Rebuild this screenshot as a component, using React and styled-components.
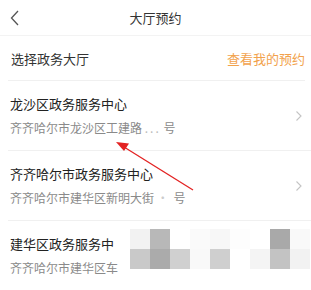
import React from 'react';
import styled, { createGlobalStyle } from 'styled-components';

const GlobalStyle = createGlobalStyle`
  html, body {
    margin: 0;
    padding: 0;
    background: #fff;
    font-family: "Noto Sans CJK SC", "Noto Sans", sans-serif;
  }
`;

const Page = styled.div`
  position: relative;
  width: 311px;
  height: 290px;
  overflow: hidden;
  background: #fff;
`;

const Header = styled.header`
  display: grid;
  grid-template-columns: 40px 1fr 40px;
  align-items: center;
  height: 35px;
  border-bottom: 1px solid #f3f3f3;
`;

const BackButton = styled.div`
  display: flex;
  align-items: center;
  padding-left: 10px;
  height: 100%;
`;

const Title = styled.h1`
  margin: 0;
  text-align: center;
  font-size: 13px;
  font-weight: 400;
  color: #333;
  line-height: 18px;
`;

const SectionHead = styled.div`
  display: flex;
  align-items: center;
  justify-content: space-between;
  height: 44px;
  margin: 0 6px 0 8px;
  padding-left: 3px;
  border-bottom: 1px solid #f0f0f0;
  font-size: 13px;
  color: #333;
`;

const MyLink = styled.span`
  color: #f2a24c;
`;

const List = styled.ul`
  list-style: none;
  margin: 0;
  padding: 0 0 0 8px;
`;

const Row = styled.li`
  position: relative;
  display: flex;
  align-items: center;
  justify-content: space-between;
  height: 69px;
  padding-right: 8px;
  border-bottom: 1px solid #f0f0f0;
`;

const RowText = styled.div`
  display: flex;
  flex-direction: column;
  gap: 6px;
  padding-left: 2px;
  align-self: flex-start;
  padding-top: 14px;
`;

const HallName = styled.div`
  font-size: 13px;
  line-height: 18px;
  color: #222;
`;

const Address = styled.div`
  font-size: 12px;
  line-height: 18px;
  color: #8a8a8a;
  white-space: nowrap;
`;

const Blur = styled.span`
  color: ${p => p.$tone || '#bbb'};
  letter-spacing: 2px;
`;

const Mosaic = styled.div`
  position: absolute;
  left: 122px;
  top: 8px;
  display: grid;
  grid-template-columns: repeat(9, 20px);
  grid-template-rows: repeat(2, 20px);
`;

const Cell = styled.div`
  background: ${p => p.$c};
`;

const Arrow = styled.svg`
  position: absolute;
  left: 0;
  top: 0;
  pointer-events: none;
`;

const mosaic = [
  '#f2f2f2', '#b8b8b8', '#ffffff', '#fafafa', '#f7f7f7', '#fdfdfd', '#ffffff', '#a9a9a9', '#f9f9f9',
  '#c9c9c9', '#ababab', '#d0d0d0', '#f9f9f9', '#cfcfcf', '#ffffff', '#f4f4f4', '#c3c3c3', '#f2f2f2',
];

const Chevron = () => (
  <svg width="8" height="12" viewBox="0 0 8 12">
    <path d="M1.5 1.5 L6 6 L1.5 10.5" fill="none" stroke="#c4c4c4" strokeWidth="1.1" />
  </svg>
);

const halls = [
  {
    name: '龙沙区政务服务中心',
    address: <>齐齐哈尔市龙沙区工建路 <Blur>...</Blur> 号</>,
    chevron: true,
  },
  {
    name: '齐齐哈尔市政务服务中心',
    address: <>齐齐哈尔市建华区新明大街 <Blur $tone="#ccc">·</Blur> 号</>,
    chevron: true,
  },
  {
    name: '建华区政务服务中',
    address: <>齐齐哈尔市建华区车</>,
    mosaic: true,
  },
];

export default function App() {
  return (
    <Page>
      <GlobalStyle />
      <Header>
        <BackButton>
          <svg width="10" height="16" viewBox="0 0 10 16">
            <path d="M8 1 L1.5 8 L8 15" fill="none" stroke="#555" strokeWidth="1.3" />
          </svg>
        </BackButton>
        <Title>大厅预约</Title>
        <span />
      </Header>
      <SectionHead>
        <span>选择政务大厅</span>
        <MyLink>查看我的预约</MyLink>
      </SectionHead>
      <List>
        {halls.map(h => (
          <Row key={h.name}>
            <RowText>
              <HallName>{h.name}</HallName>
              <Address>{h.address}</Address>
            </RowText>
            {h.chevron && <Chevron />}
            {h.mosaic && (
              <Mosaic>
                {mosaic.map((c, i) => <Cell key={i} $c={c} />)}
              </Mosaic>
            )}
          </Row>
        ))}
      </List>
      <Arrow width="311" height="290" viewBox="0 0 311 290">
        <line x1="193" y1="190" x2="124" y2="147" stroke="#e32222" strokeWidth="1.3" />
        <polygon points="116,142 129,143.5 124,151" fill="#e32222" />
      </Arrow>
    </Page>
  );
}
